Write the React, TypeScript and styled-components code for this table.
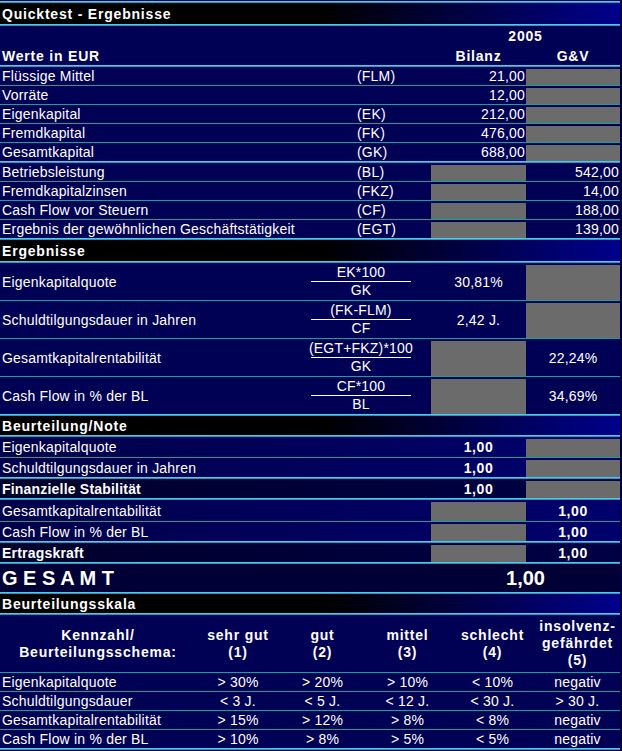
import React from 'react';
import styled, { createGlobalStyle, css } from 'styled-components';

const C = {
  navy: '#000055',
  cyanTop: '#4ccbe8',
  cyanBot: '#2a98bc',
  teal: '#14a392',
  gray: '#6b6b6b',
};

const GlobalStyle = createGlobalStyle`
  html, body { margin: 0; padding: 0; background: #00003c; }
  body { font-family: "Liberation Sans", Arial, sans-serif; color: #fff; }
`;

const Sheet = styled.div`
  width: 620px;
  padding-top: 1px;
  background: ${C.navy};
  font-size: 14px;
  letter-spacing: 0.2px;
`;

const Rule = styled.div`
  height: 2px;
  background: linear-gradient(to bottom, ${C.cyanTop} 50%, ${C.cyanBot} 50%);
`;

const SectionBar = styled.div<{ $h: number }>`
  height: ${p => p.$h}px;
  display: flex;
  align-items: center;
  padding-left: 2px;
  font-weight: bold;
  letter-spacing: 0.8px;
  background: linear-gradient(90deg, #000 0%, #000 52%, #00008c 100%);
`;

const MAIN_COLS = '357px 74px 95px 94px';
const RATIO_COLS = '291px 140px 95px 94px';
const GRADE_COLS = '431px 95px 94px';
const SCALE_COLS = '196px 84px 85px 85px 85px 85px';

const ColHead = styled.div`
  display: grid;
  grid-template-columns: ${MAIN_COLS};
  grid-template-rows: 20px 19px;
  font-weight: bold;
  letter-spacing: 0.8px;
`;

const HeadCell = styled.div<{ $col: string; $row: number; $align?: string }>`
  grid-column: ${p => p.$col};
  grid-row: ${p => p.$row};
  display: flex;
  align-items: center;
  justify-content: ${p => p.$align ?? 'center'};
  padding-left: ${p => (p.$align === 'flex-start' ? '2px' : '0')};
`;

const lineCss = css<{ $line?: boolean }>`
  ${p => p.$line && css`border-bottom: 1px solid ${C.teal};`}
`;

const MainRow = styled.div<{ $line?: boolean }>`
  display: grid;
  grid-template-columns: ${MAIN_COLS};
  height: 18px;
  ${lineCss}
`;

const RatioRow = styled.div<{ $line?: boolean }>`
  display: grid;
  grid-template-columns: ${RATIO_COLS};
  height: 37px;
  ${lineCss}
`;

const GradeRow = styled.div<{ $line?: boolean; $h: number; $strong?: boolean }>`
  display: grid;
  grid-template-columns: ${GRADE_COLS};
  height: ${p => p.$h}px;
  background: ${p =>
    p.$strong
      ? 'linear-gradient(90deg, #00002a, #000046)'
      : 'linear-gradient(90deg, #00004a, #00006c)'};
  font-weight: ${p => (p.$strong ? 'bold' : 'normal')};
  ${lineCss}
`;

const TotalRow = styled.div`
  display: grid;
  grid-template-columns: 431px 189px;
  height: 28px;
  background: #000036;
  font-weight: bold;
  font-size: 20px;
  letter-spacing: 0;
`;

const ScaleHead = styled.div`
  display: grid;
  grid-template-columns: ${SCALE_COLS};
  height: 57px;
  border-bottom: 1px solid ${C.teal};
  font-weight: bold;
  letter-spacing: 0.8px;
  line-height: 17px;
`;

const ScaleRow = styled.div<{ $line?: boolean }>`
  display: grid;
  grid-template-columns: ${SCALE_COLS};
  height: 18px;
  ${lineCss}
`;

const Label = styled.div`
  display: flex;
  align-items: center;
  padding-left: 2px;
  white-space: nowrap;
`;

const Abbr = styled.div`
  display: flex;
  align-items: center;
  white-space: nowrap;
`;

const Num = styled.div`
  display: flex;
  align-items: center;
  justify-content: flex-end;
  padding-right: 1px;
`;

const Center = styled.div<{ $bold?: boolean }>`
  display: flex;
  align-items: center;
  justify-content: center;
  white-space: nowrap;
  font-weight: ${p => (p.$bold ? 'bold' : 'inherit')};
  letter-spacing: ${p => (p.$bold ? '0.6px' : 'inherit')};
`;

const HeadText = styled.div`
  display: flex;
  align-items: center;
  justify-content: center;
  text-align: center;
`;

const Gray = styled.div`
  background: ${C.gray};
  margin-top: 2px;
`;

const Fraction = styled.div`
  display: flex;
  flex-direction: column;
  align-items: center;
  justify-content: center;
`;

const Numer = styled.div`
  width: 100px;
  display: flex;
  justify-content: center;
  white-space: nowrap;
  line-height: 17px;
  border-bottom: 1px solid #fff;
`;

const Denom = styled.div`
  line-height: 17px;
`;

const Spacer = styled.div``;

const TotalLabel = styled.div`
  display: flex;
  align-items: center;
  padding-left: 2px;
`;

const main1 = [
  ['Flüssige Mittel', '(FLM)', '21,00'],
  ['Vorräte', '', '12,00'],
  ['Eigenkapital', '(EK)', '212,00'],
  ['Fremdkapital', '(FK)', '476,00'],
  ['Gesamtkapital', '(GK)', '688,00'],
];

const main2 = [
  ['Betriebsleistung', '(BL)', '542,00'],
  ['Fremdkapitalzinsen', '(FKZ)', '14,00'],
  ['Cash Flow vor Steuern', '(CF)', '188,00'],
  ['Ergebnis der gewöhnlichen Geschäftstätigkeit', '(EGT)', '139,00'],
];

const ratios = [
  { label: 'Eigenkapitalquote', num: 'EK*100', den: 'GK', bilanz: true, val: '30,81%' },
  { label: 'Schuldtilgungsdauer in Jahren', num: '(FK-FLM)', den: 'CF', bilanz: true, val: '2,42 J.' },
  { label: 'Gesamtkapitalrentabilität', num: '(EGT+FKZ)*100', den: 'GK', bilanz: false, val: '22,24%' },
  { label: 'Cash Flow in % der BL', num: 'CF*100', den: 'BL', bilanz: false, val: '34,69%' },
];

type Grade = { label: string; bilanz: boolean; h: number; strong?: boolean; after: 'teal' | 'cyan' };
const grades: Grade[] = [
  { label: 'Eigenkapitalquote', bilanz: true, h: 20, after: 'teal' },
  { label: 'Schuldtilgungsdauer in Jahren', bilanz: true, h: 19, after: 'cyan' },
  { label: 'Finanzielle Stabilität', bilanz: true, h: 19, strong: true, after: 'cyan' },
  { label: 'Gesamtkapitalrentabilität', bilanz: false, h: 21, after: 'teal' },
  { label: 'Cash Flow in % der BL', bilanz: false, h: 19, after: 'cyan' },
  { label: 'Ertragskraft', bilanz: false, h: 19, strong: true, after: 'cyan' },
];

const scaleHead: React.ReactNode[] = [
  <>Kennzahl/<br />Beurteilungsschema:</>,
  <>sehr gut<br />(1)</>,
  <>gut<br />(2)</>,
  <>mittel<br />(3)</>,
  <>schlecht<br />(4)</>,
  <>insolvenz-<br />gefährdet<br />(5)</>,
];

const scale = [
  ['Eigenkapitalquote', '> 30%', '> 20%', '> 10%', '< 10%', 'negativ'],
  ['Schuldtilgungsdauer', '< 3 J.', '< 5 J.', '< 12 J.', '< 30 J.', '> 30 J.'],
  ['Gesamtkapitalrentabilität', '> 15%', '> 12%', '> 8%', '< 8%', 'negativ'],
  ['Cash Flow in % der BL', '> 10%', '> 8%', '> 5%', '< 5%', 'negativ'],
];

export default function App() {
  return (
    <>
      <GlobalStyle />
      <Sheet>
        <Rule />
        <SectionBar $h={21}>Quicktest - Ergebnisse</SectionBar>
        <Rule />
        <ColHead>
          <HeadCell $col="3 / 5" $row={1}>2005</HeadCell>
          <HeadCell $col="1 / 2" $row={2} $align="flex-start">Werte in EUR</HeadCell>
          <HeadCell $col="3 / 4" $row={2}>Bilanz</HeadCell>
          <HeadCell $col="4 / 5" $row={2}>G&amp;V</HeadCell>
        </ColHead>
        <Rule />
        {main1.map(([l, a, v], i) => (
          <MainRow key={l} $line={i < main1.length - 1}>
            <Label>{l}</Label>
            <Abbr>{a}</Abbr>
            <Num>{v}</Num>
            <Gray />
          </MainRow>
        ))}
        <Rule />
        {main2.map(([l, a, v], i) => (
          <MainRow key={l} $line={i < main2.length - 1}>
            <Label>{l}</Label>
            <Abbr>{a}</Abbr>
            <Gray />
            <Num>{v}</Num>
          </MainRow>
        ))}
        <Rule />
        <SectionBar $h={21}>Ergebnisse</SectionBar>
        <Rule />
        {ratios.map((r, i) => (
          <RatioRow key={r.label} $line={i < ratios.length - 1}>
            <Label>{r.label}</Label>
            <Fraction>
              <Numer>{r.num}</Numer>
              <Denom>{r.den}</Denom>
            </Fraction>
            {r.bilanz ? (
              <>
                <Center>{r.val}</Center>
                <Gray />
              </>
            ) : (
              <>
                <Gray />
                <Center>{r.val}</Center>
              </>
            )}
          </RatioRow>
        ))}
        <Rule />
        <SectionBar $h={19}>Beurteilung/Note</SectionBar>
        <Rule />
        {grades.map(g => (
          <React.Fragment key={g.label}>
            <GradeRow $h={g.h} $strong={g.strong} $line={g.after === 'teal'}>
              <Label>{g.label}</Label>
              {g.bilanz ? (
                <>
                  <Center $bold>1,00</Center>
                  <Gray />
                </>
              ) : (
                <>
                  <Gray />
                  <Center $bold>1,00</Center>
                </>
              )}
            </GradeRow>
            {g.after === 'cyan' && <Rule />}
          </React.Fragment>
        ))}
        <TotalRow>
          <TotalLabel>G E S A M T</TotalLabel>
          <Center>1,00</Center>
        </TotalRow>
        <Rule />
        <SectionBar $h={19}>Beurteilungsskala</SectionBar>
        <Rule />
        <ScaleHead>
          {scaleHead.map((h, i) => (
            <HeadText key={i}>
              <div>{h}</div>
            </HeadText>
          ))}
        </ScaleHead>
        {scale.map((r, i) => (
          <ScaleRow key={r[0]} $line={i < scale.length - 1}>
            <Label>{r[0]}</Label>
            {r.slice(1).map((v, j) => (
              <Center key={j}>{v}</Center>
            ))}
          </ScaleRow>
        ))}
        <Rule />
        <Spacer />
      </Sheet>
    </>
  );
}
